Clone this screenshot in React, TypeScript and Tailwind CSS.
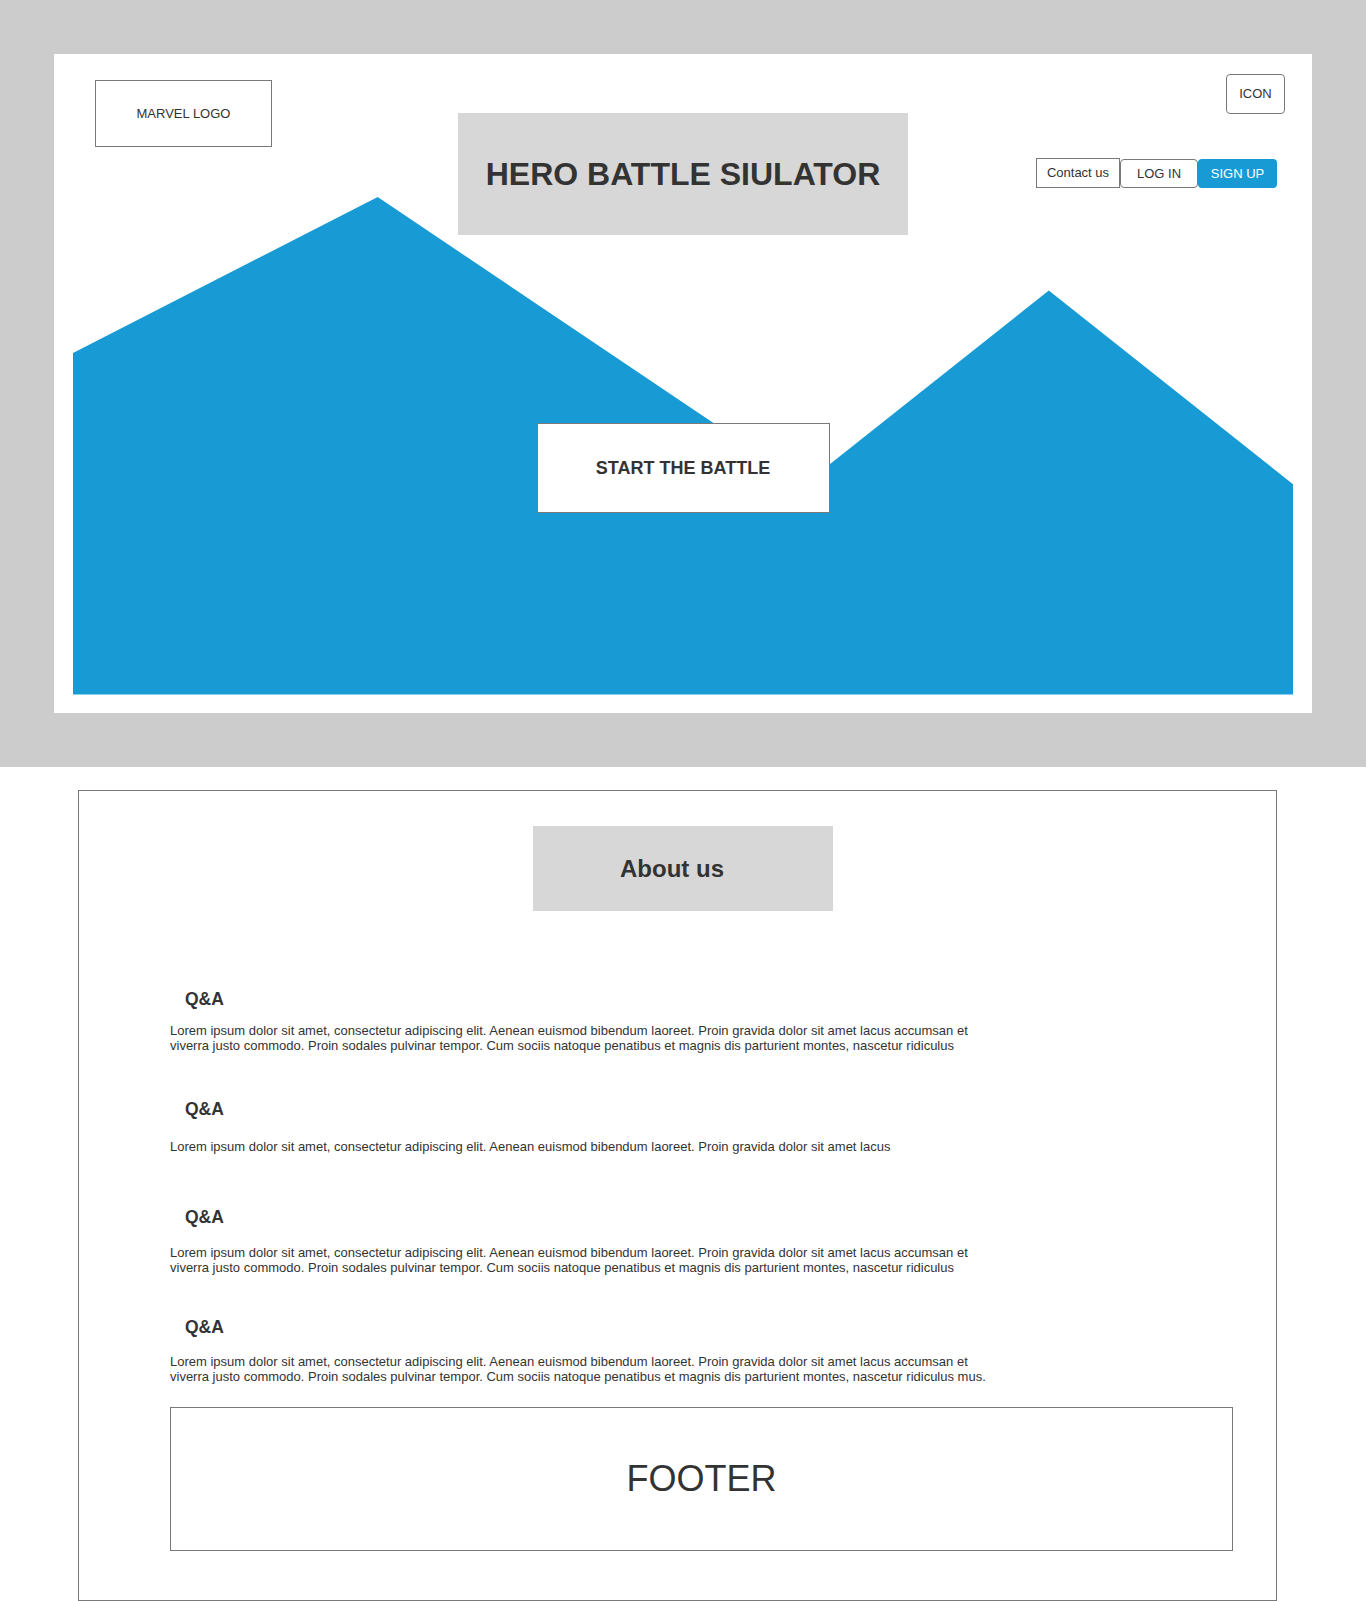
import React from "react";

const qa = [
  {
    qmt: "mt-[78px]",
    pmt: "mt-[14px]",
    text: "Lorem ipsum dolor sit amet, consectetur adipiscing elit. Aenean euismod bibendum laoreet. Proin gravida dolor sit amet lacus accumsan et viverra justo commodo. Proin sodales pulvinar tempor. Cum sociis natoque penatibus et magnis dis parturient montes, nascetur ridiculus",
  },
  {
    qmt: "mt-[46px]",
    pmt: "mt-[20px]",
    text: "Lorem ipsum dolor sit amet, consectetur adipiscing elit. Aenean euismod bibendum laoreet. Proin gravida dolor sit amet lacus",
  },
  {
    qmt: "mt-[53px]",
    pmt: "mt-[18px]",
    text: "Lorem ipsum dolor sit amet, consectetur adipiscing elit. Aenean euismod bibendum laoreet. Proin gravida dolor sit amet lacus accumsan et viverra justo commodo. Proin sodales pulvinar tempor. Cum sociis natoque penatibus et magnis dis parturient montes, nascetur ridiculus",
  },
  {
    qmt: "mt-[42px]",
    pmt: "mt-[17px]",
    text: "Lorem ipsum dolor sit amet, consectetur adipiscing elit. Aenean euismod bibendum laoreet. Proin gravida dolor sit amet lacus accumsan et viverra justo commodo. Proin sodales pulvinar tempor. Cum sociis natoque penatibus et magnis dis parturient montes, nascetur ridiculus mus.",
  },
];

export default function App() {
  return (
    <div className="w-[1366px] font-['Liberation_Sans',Arial,sans-serif] text-[#333333] bg-white">
      {/* Hero */}
      <section className="bg-[#cccccc] p-[54px]">
        <div className="relative h-[659px] bg-white">
          <svg
            className="absolute inset-0"
            width="1258"
            height="659"
            viewBox="0 0 1258 659"
          >
            <polygon
              points="19,640.5 19,299 323.7,143 750.5,430.2 994.8,236.5 1239,430.2 1239,640.5"
              fill="#189bd4"
            />
          </svg>
          <div className="relative grid grid-cols-[1fr_450px_1fr] h-full">
            <div>
              <div className="ml-[41px] mt-[26px] w-[177px] h-[67px] border border-[#797979] flex items-center justify-center text-[13px]">
                MARVEL LOGO
              </div>
            </div>
            <div className="flex flex-col items-center">
              <div className="mt-[59px] w-[450px] h-[122px] bg-[#d7d7d7] flex items-center justify-center">
                <h1 className="text-[32px] font-bold leading-none">HERO BATTLE SIULATOR</h1>
              </div>
              <button className="mt-[188px] w-[293px] h-[90px] bg-white border border-[#797979] flex items-center justify-center text-[18px] font-bold">
                START THE BATTLE
              </button>
            </div>
            <div className="flex flex-col items-end pr-[27px] pt-[20px]">
              <div className="w-[59px] h-[40px] border border-[#797979] rounded-[4px] flex items-center justify-center text-[13px]">
                ICON
              </div>
              <div className="mt-[44px] mr-[8px] flex items-end">
                <button className="w-[84px] h-[30px] border border-[#797979] bg-white flex items-center justify-center text-[13px]">
                  Contact us
                </button>
                <button className="w-[78px] h-[29px] border border-[#797979] rounded-[4px] bg-white flex items-center justify-center text-[13px]">
                  LOG IN
                </button>
                <button className="w-[79px] h-[29px] rounded-[4px] bg-[#189bd4] text-white flex items-center justify-center text-[13px]">
                  SIGN UP
                </button>
              </div>
            </div>
          </div>
        </div>
      </section>

      {/* About */}
      <section className="pt-[23px]">
        <div className="ml-[78px] w-[1199px] h-[811px] border border-[#797979] pt-[35px] pl-[91px]">
          <div className="ml-[363px] w-[300px] h-[85px] bg-[#d7d7d7] flex items-center justify-center pr-[22px]">
            <h2 className="text-[24px] font-bold leading-none">About us</h2>
          </div>
          {qa.map((item, i) => (
            <div key={i}>
              <h3 className={`${item.qmt} pl-[15px] text-[17.5px] leading-[20px] font-bold`}>Q&amp;A</h3>
              <p className={`${item.pmt} w-[820px] text-[13px] leading-[15px]`}>{item.text}</p>
            </div>
          ))}
          <div className="mt-[23px] w-[1063px] h-[144px] border border-[#797979] flex items-center justify-center">
            <span className="text-[36px] leading-none">FOOTER</span>
          </div>
        </div>
      </section>
    </div>
  );
}
